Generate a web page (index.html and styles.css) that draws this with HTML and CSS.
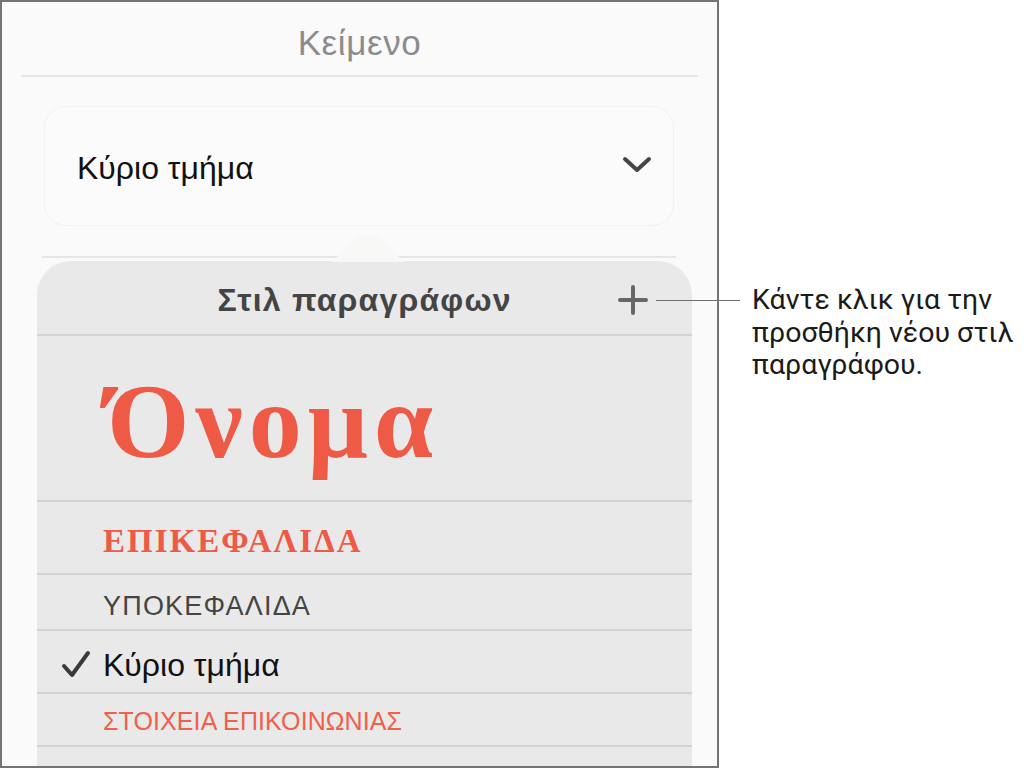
FILE: index.html
```html
<!DOCTYPE html>
<html lang="el">
<head>
    <meta charset="UTF-8">
    <meta name="viewport" content="width=device-width, initial-scale=1.0">
    <title>Στιλ παραγράφων</title>
    <link rel="stylesheet" href="styles.css">
</head>
<body>
    <div class="panel">
        <div class="panel-title">Κείμενο</div>

        <div class="style-select">
            <span>Κύριο τμήμα</span>
            <svg class="chevron" width="30" height="18" viewBox="0 0 30 18">
                <path d="M3 3 L15 14 L27 3" fill="none" stroke="#454545" stroke-width="4" stroke-linecap="round" stroke-linejoin="round"/>
            </svg>
        </div>

        <div class="divider"></div>

        <div class="popover">
            <svg class="popover-arrow" width="72" height="30" viewBox="0 0 72 30">
                <path d="M0 30 L27 4 Q36 -3 45 4 L72 30 Z" fill="#f8f8f7"/>
            </svg>

            <div class="popover-head">
                Στιλ παραγράφων
                <svg class="add-btn" width="30" height="30" viewBox="0 0 30 30">
                    <path d="M15 2 V28 M2 15 H28" fill="none" stroke="#676767" stroke-width="4" stroke-linecap="round"/>
                </svg>
            </div>

            <div class="style-row row-title">Όνομα</div>
            <div class="style-row row-heading">ΕΠΙΚΕΦΑΛΙΔΑ</div>
            <div class="style-row row-subheading">ΥΠΟΚΕΦΑΛΙΔΑ</div>
            <div class="style-row row-body selected">
                <svg class="check" width="30" height="28" viewBox="0 0 30 28">
                    <path d="M3 16 L11 25 L27 3" fill="none" stroke="#3a3a3a" stroke-width="4" stroke-linecap="round" stroke-linejoin="round"/>
                </svg>
                Κύριο τμήμα
            </div>
            <div class="style-row row-contact">ΣΤΟΙΧΕΙΑ ΕΠΙΚΟΙΝΩΝΙΑΣ</div>
            <div class="style-row row-empty"></div>
        </div>
    </div>

    <div class="callout">
        Κάντε κλικ για την<br>
        προσθήκη νέου στιλ<br>
        παραγράφου.
    </div>
</body>
</html>
```

FILE: styles.css
```css
body {
    margin: 0;
    background: white;
    display: flex;
    align-items: flex-start;
    font-family: "Liberation Sans", Arial, sans-serif;
}
.panel {
    box-sizing: border-box;
    width: 719px;
    height: 768px;
    border: 2px solid #747474;
    background: #fafafa;
    overflow: hidden;
    display: flex;
    flex-direction: column;
}
.panel-title {
    margin: 0 19px;
    padding-top: 8px;
    line-height: 65px;
    text-align: center;
    font-size: 35px;
    letter-spacing: 0.6px;
    color: #8c8c8c;
    border-bottom: 2px solid #e6e6e6;
}
.style-select {
    margin: 29px 43px 0 42px;
    height: 120px;
    box-sizing: border-box;
    padding: 4px 21px 0 32px;
    border: 1px solid #f1f1f1;
    border-radius: 22px;
    background: #fbfbfb;
    display: flex;
    align-items: center;
    justify-content: space-between;
    font-size: 32px;
    color: #111;
}
.chevron {
    margin-top: -6px;
}
.divider {
    margin: 30px 41px 0 40px;
    border-top: 2px solid #e6e6e6;
}
.popover {
    position: relative;
    margin: 3px 25px 0 35px;
    flex: 1;
    background: #e9e9e9;
    border-radius: 34px 34px 0 0;
}
.popover-arrow {
    position: absolute;
    left: 295px;
    top: -29px;
}
.popover-head {
    position: relative;
    height: 73px;
    line-height: 78px;
    text-align: center;
    font-size: 32px;
    font-weight: bold;
    letter-spacing: 1.2px;
    color: #444;
    border-bottom: 2px solid #d3d3d3;
}
.add-btn {
    position: absolute;
    right: 44px;
    top: 24px;
}
.style-row {
    box-sizing: border-box;
    display: flex;
    align-items: center;
    padding-left: 66px;
    border-bottom: 2px solid #d3d3d3;
    font-size: 32px;
}
.row-title {
    height: 166px;
    padding-left: 70px;
    padding-top: 8px;
    font-family: "Liberation Serif", "Times New Roman", serif;
    font-weight: bold;
    font-size: 106px;
    letter-spacing: 6px;
    color: #ef5a46;
}
.row-heading {
    height: 73px;
    padding-top: 8px;
    font-family: "Liberation Serif", "Times New Roman", serif;
    font-weight: bold;
    font-size: 33px;
    letter-spacing: 2px;
    color: #ef5a46;
}
.row-subheading {
    height: 56px;
    padding-top: 8px;
    font-size: 27px;
    letter-spacing: 1.2px;
    color: #444;
}
.row-body {
    height: 63px;
    padding-top: 8px;
    color: #111;
}
.selected {
    padding-left: 24px;
}
.check {
    margin-right: 12px;
    margin-top: -4px;
}
.row-contact {
    height: 53px;
    padding-top: 4px;
    font-size: 25px;
    letter-spacing: 0.1px;
    color: #f0604c;
}
.row-empty {
    border-bottom: none;
}
.callout {
    position: relative;
    margin: 284px 0 0 33px;
    font-family: Roboto, "Noto Sans", sans-serif;
    font-size: 28.5px;
    line-height: 32.5px;
    color: #1b1b1b;
}
.callout::before {
    content: "";
    position: absolute;
    left: -96px;
    top: 16px;
    width: 84px;
    border-top: 1px solid #707070;
}
```
